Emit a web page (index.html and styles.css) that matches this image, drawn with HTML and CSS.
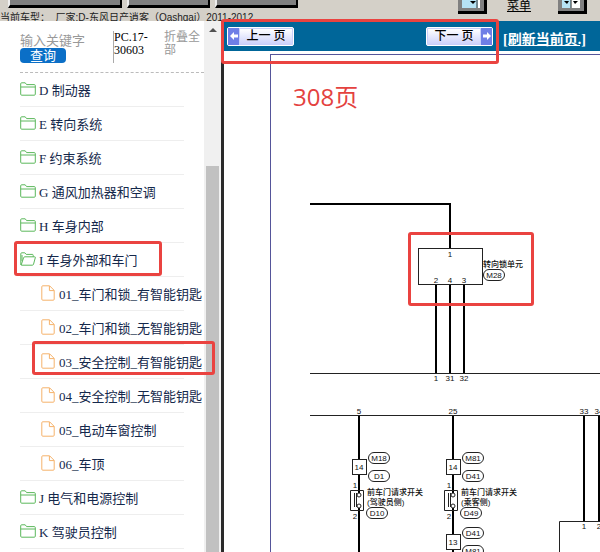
FILE: index.html
```html
<!DOCTYPE html>
<html lang="zh-CN">
<head>
    <meta charset="UTF-8">
    <meta name="viewport" content="width=device-width, initial-scale=1.0">
    <title>308页</title>
    <link rel="stylesheet" href="styles.css">
</head>
<body>
    <!-- shared icons -->
    <svg class="defs" aria-hidden="true">
        <symbol id="folder" viewBox="0 0 16 14">
            <path d="M.7 12.2V1.8Q.7.8 1.7.8H5.2L6.6 2.6H14.3Q15.3 2.6 15.3 3.6V12.2Q15.3 13.2 14.3 13.2H1.7Q.7 13.2.7 12.2ZM.7 5H15.3"/>
        </symbol>
        <symbol id="folder-open" viewBox="0 0 16 14">
            <path d="M.8 12.6V1.8Q.8.8 1.8.8H4.8L6.2 2.4H12.4Q13.2 2.4 13.2 3.4V4.8M1.2 13L3.6 5.7Q3.9 4.8 4.8 4.8H14.6Q15.6 4.8 15.3 5.7L13.5 12.3Q13.3 13.2 12.3 13.2H1.6Q.8 13.2.8 12.2M2 3V9"/>
        </symbol>
        <symbol id="file" viewBox="0 0 14 16">
            <path d="M1.7.8H8.6L13.2 5.4V14.2Q13.2 15.2 12.2 15.2H1.8Q.8 15.2.8 14.2V1.8Q.8.8 1.7.8ZM8.4 1V5.6H13"/>
        </symbol>
        <symbol id="switch" viewBox="0 0 16 23">
            <path d="M1.5 1.5H14.5V21.5H1.5ZM5.5 4V18M7.5 4V18" fill="none" stroke="#222"/>
            <circle cx="10" cy="6" r="2" fill="#fff" stroke="#222"/>
            <circle cx="10" cy="17" r="2" fill="#fff" stroke="#222"/>
        </symbol>
    </svg>

    <header class="toolbar">
        <div class="toolbar-buttons">
            <button class="tool" aria-label="车型"></button>
            <button class="tool narrow" aria-label="手册"></button>
            <button class="tool narrow" aria-label="电路图"></button>
            <div class="menu">
                <button class="icon-btn" aria-label="单栏">
                    <svg width="18" height="8" viewBox="0 0 18 8"><path d="M0 0H18V8H0Z" fill="#b6e3f5"/><path d="M15 0V8" stroke="#333"/><path d="M17 0V8" stroke="#fff" stroke-width="2"/><path d="M8 1H14L11 4Z" fill="#000"/></svg>
                </button>
                <a class="menu-link" href="#">菜单</a>
                <button class="icon-btn" aria-label="双栏">
                    <svg width="18" height="8" viewBox="0 0 18 8"><path d="M0 0H9V8H0Z" fill="#b6e3f5"/><path d="M9 0H18V8H9Z" fill="#fff"/><path d="M9 0V8" stroke="#222"/><path d="M2 1H7L5 4ZM11 1H16L13 4Z" fill="#000"/></svg>
                </button>
            </div>
        </div>
        <div class="car">当前车型：&nbsp; 厂家:D-东风日产逍客（Qashqai）2011-2012</div>
    </header>

    <main class="panes">
        <aside class="sidebar">
            <div class="sidebar-body">
                <form class="search">
                    <div class="search-field">
                        <input type="text" aria-label="输入关键字" placeholder="输入关键字">
                        <button type="button">查询</button>
                    </div>
                    <div class="code">PC.17-<br>30603</div>
                    <a class="collapse" href="#">折叠全部</a>
                </form>
                <ul class="tree">
                    <li><a href="#"><svg class="folder"><use href="#folder"/></svg>D 制动器</a></li>
                    <li><a href="#"><svg class="folder"><use href="#folder"/></svg>E 转向系统</a></li>
                    <li><a href="#"><svg class="folder"><use href="#folder"/></svg>F 约束系统</a></li>
                    <li><a href="#"><svg class="folder"><use href="#folder"/></svg>G 通风加热器和空调</a></li>
                    <li><a href="#"><svg class="folder"><use href="#folder"/></svg>H 车身内部</a></li>
                    <li><a href="#"><svg class="folder"><use href="#folder-open"/></svg>I 车身外部和车门</a></li>
                    <li class="leaf"><a href="#"><svg class="file"><use href="#file"/></svg>01_车门和锁_有智能钥匙</a></li>
                    <li class="leaf"><a href="#"><svg class="file"><use href="#file"/></svg>02_车门和锁_无智能钥匙</a></li>
                    <li class="leaf"><a href="#"><svg class="file"><use href="#file"/></svg>03_安全控制_有智能钥匙</a></li>
                    <li class="leaf"><a href="#"><svg class="file"><use href="#file"/></svg>04_安全控制_无智能钥匙</a></li>
                    <li class="leaf"><a href="#"><svg class="file"><use href="#file"/></svg>05_电动车窗控制</a></li>
                    <li class="leaf"><a href="#"><svg class="file"><use href="#file"/></svg>06_车顶</a></li>
                    <li><a href="#"><svg class="folder"><use href="#folder"/></svg>J 电气和电源控制</a></li>
                    <li><a href="#"><svg class="folder"><use href="#folder"/></svg>K 驾驶员控制</a></li>
                </ul>
            </div>
            <div class="scrollbar">
                <svg width="8" height="4" viewBox="0 0 8 4"><path d="M0 4L4 0L8 4Z" fill="#505050"/></svg>
                <div class="thumb"></div>
            </div>
        </aside>

        <section class="viewer">
            <nav class="pager">
                <button class="page-btn prev">
                    <span class="arrow"><svg width="8" height="8" viewBox="0 0 8 8"><path d="M0 4L4 0V2.5H8V5.5H4V8Z" fill="#fff"/></svg></span>
                    <span class="page-label">上一 页</span>
                </button>
                <button class="page-btn next">
                    <span class="page-label">下一 页</span>
                    <span class="arrow"><svg width="8" height="8" viewBox="0 0 8 8"><path d="M8 4L4 0V2.5H0V5.5H4V8Z" fill="#fff"/></svg></span>
                </button>
                <a class="refresh" href="#">[刷新当前页.]</a>
            </nav>
            <div class="sheet">
                <svg class="diagram" width="329" height="497" viewBox="0 0 329 497">
                    <!-- steering lock unit -->
                    <path class="wire" d="M39 149H179V193M165 229V318M179 229V318M193 229V318"/>
                    <path class="thin" d="M39 318.5H329M39 360.5H329"/>
                    <rect class="thin" x="147.5" y="193.5" width="64" height="36"/>
                    <g class="pin">
                        <text x="179" y="202">1</text>
                        <text x="165" y="228">2</text>
                        <text x="179" y="228">4</text>
                        <text x="193" y="228">3</text>
                        <text x="165" y="326">1</text>
                        <text x="179" y="326">31</text>
                        <text x="193" y="326">32</text>
                    </g>
                    <text class="name" x="212" y="212">转向锁单元</text>
                    <rect class="thin" x="212.5" y="214.5" width="21" height="11" rx="5.5"/>
                    <text class="tag" x="223" y="223">M28</text>

                    <!-- driver side switch -->
                    <path class="wire" d="M88 361V404M88 419V438M88 453V497"/>
                    <rect class="thin" x="81.5" y="404.5" width="14" height="15"/>
                    <use href="#switch" x="78" y="434" width="16" height="23"/>
                    <g class="pin">
                        <text x="88" y="359">5</text>
                        <text x="88" y="415">14</text>
                        <text x="84" y="433">1</text>
                        <text x="84" y="464">2</text>
                    </g>
                    <rect class="thin" x="97.5" y="397.5" width="21" height="11" rx="5.5"/>
                    <rect class="thin" x="97.5" y="415.5" width="21" height="11" rx="5.5"/>
                    <rect class="thin" x="95.5" y="452.5" width="21" height="11" rx="5.5"/>
                    <text class="tag" x="108" y="406">M18</text>
                    <text class="tag" x="108" y="424">D1</text>
                    <text class="tag" x="106" y="461">D10</text>
                    <text class="name" x="96" y="440">前车门请求开关</text>
                    <text class="name" x="96" y="450">(驾驶员侧)</text>

                    <!-- passenger side switch -->
                    <g transform="translate(94 0)">
                        <path class="wire" d="M88 361V404M88 419V438M88 453V479M88 494V497"/>
                        <rect class="thin" x="81.5" y="404.5" width="14" height="15"/>
                        <rect class="thin" x="81.5" y="479.5" width="14" height="15"/>
                        <use href="#switch" x="78" y="434" width="16" height="23"/>
                        <g class="pin">
                            <text x="88" y="359">25</text>
                            <text x="88" y="415">14</text>
                            <text x="84" y="433">1</text>
                            <text x="84" y="464">2</text>
                            <text x="88" y="490">13</text>
                        </g>
                        <rect class="thin" x="97.5" y="397.5" width="21" height="11" rx="5.5"/>
                        <rect class="thin" x="97.5" y="415.5" width="21" height="11" rx="5.5"/>
                        <rect class="thin" x="95.5" y="452.5" width="21" height="11" rx="5.5"/>
                        <rect class="thin" x="97.5" y="472.5" width="21" height="11" rx="5.5"/>
                        <rect class="thin" x="97.5" y="490.5" width="21" height="11" rx="5.5"/>
                        <text class="tag" x="108" y="406">M81</text>
                        <text class="tag" x="108" y="424">D41</text>
                        <text class="tag" x="106" y="461">D49</text>
                        <text class="tag" x="108" y="481">D41</text>
                        <text class="tag" x="108" y="499">M81</text>
                        <text class="name" x="96" y="440">前车门请求开关</text>
                        <text class="name" x="96" y="450">(乘客侧)</text>
                    </g>

                    <path class="wire" d="M313 361V466M328 361V466"/>
                    <path class="thin" d="M288.5 497V466.5H329"/>
                    <g class="pin">
                        <text x="313" y="359">33</text>
                        <text x="328" y="359">34</text>
                        <text x="313" y="474">1</text>
                        <text x="328" y="474">2</text>
                    </g>
                </svg>
            </div>
        </section>
    </main>

    <!-- red marks over the page -->
    <div class="mark mark-pager"></div>
    <div class="mark mark-chapter"></div>
    <div class="mark mark-item"></div>
    <div class="mark mark-unit"></div>
    <div class="mark-text">308页</div>
</body>
</html>
```
FILE: styles.css
```css
* {
    box-sizing: border-box;
}
body {
    margin: 0;
    height: 100vh;
    display: flex;
    flex-direction: column;
    overflow: hidden;
    position: relative;
    background: #fff;
    font-family: "Liberation Serif", "Noto Sans CJK SC", serif;
    font-size: 13px;
}
button, input {
    font: inherit;
    padding: 0;
    border: 0;
    margin: 0;
}
.defs {
    position: absolute;
    width: 0;
    height: 0;
}

/* top bar */
.toolbar {
    height: 21px;
    overflow: hidden;
    background: #d4d0c8;
}
.toolbar-buttons {
    display: flex;
    align-items: flex-start;
    gap: 5px;
    height: 11px;
    padding-left: 8px;
}
.tool {
    width: 114px;
    height: 8px;
    background: #808080;
    border-left: 2px solid #eee;
    border-right: 2px solid #000;
    border-bottom: 3px solid #000;
}
.tool.narrow {
    width: 83px;
}
.menu {
    display: flex;
    align-items: flex-start;
    gap: 20px;
    margin-left: auto;
    padding-right: 13px;
}
.icon-btn {
    width: 29px;
    height: 14px;
    display: flex;
    justify-content: center;
    align-items: flex-start;
    background: #808080;
    border-right: 3px solid #000;
    border-bottom: 3px solid #000;
}
.menu-link {
    margin-right: 7px;
    color: #000;
    font-size: 12px;
    line-height: 13px;
}
.car {
    font-family: "Liberation Sans", "Noto Sans CJK SC", sans-serif;
    font-size: 10px;
    line-height: 13px;
    white-space: nowrap;
    color: #222;
}

.panes {
    flex: 1;
    display: flex;
    min-height: 0;
}

/* left tree */
.sidebar {
    width: 224px;
    flex: none;
    display: flex;
    border-right: 3px solid #2a2a2a;
}
.sidebar-body {
    flex: 1;
    padding-left: 20px;
    overflow: hidden;
}
.search {
    display: flex;
    align-items: flex-start;
    height: 52px;
    padding-top: 10px;
    border-bottom: 1px dashed #bbb;
}
.search-field {
    width: 93px;
    display: flex;
    flex-direction: column;
    align-items: flex-start;
    padding-top: 2px;
}
.search-field input {
    width: 80px;
    height: 15px;
    background: none;
    color: #333;
}
.search-field input::placeholder {
    color: #999;
}
.search-field button {
    width: 46px;
    height: 15px;
    line-height: 15px;
    border-radius: 4px;
    background: #0b6fc7;
    color: #fff;
}
.code, .collapse {
    font-size: 12px;
    line-height: 13px;
}
.code {
    width: 51px;
    height: 32px;
    border-left: 1px solid #aaa;
}
.collapse {
    width: 38px;
    color: #999;
    text-decoration: none;
}
.tree {
    list-style: none;
    margin: 0;
    padding: 0;
}
.tree li {
    width: 164px;
    height: 34px;
    border-bottom: 1px solid #eee;
}
.tree a {
    display: flex;
    align-items: center;
    gap: 3px;
    height: 32px;
    white-space: nowrap;
    color: #14284b;
    text-decoration: none;
}
.tree .leaf a {
    gap: 4px;
    padding-left: 21px;
}
.folder {
    width: 16px;
    height: 14px;
    flex: none;
    fill: none;
    stroke: #5cb85c;
}
.file {
    width: 14px;
    height: 16px;
    flex: none;
    fill: none;
    stroke: #f5b26b;
}
.scrollbar {
    width: 17px;
    display: flex;
    flex-direction: column;
    align-items: center;
    padding: 7px 2px 0;
    background: #f0f0f0;
}
.thumb {
    width: 13px;
    flex: 1;
    margin-top: 134px;
    background: #c1c1c1;
}

/* page viewer */
.viewer {
    flex: 1;
    min-width: 0;
    display: flex;
    flex-direction: column;
}
.pager {
    display: flex;
    align-items: center;
    height: 30px;
    padding-left: 3px;
    background: #069;
}
.page-btn {
    display: flex;
    width: 67px;
    height: 19px;
    border: 1px solid #fff;
    border-radius: 2px;
    background: #c9cffa;
    color: #000;
}
.page-label {
    flex: 1;
    margin: 1px;
    background: linear-gradient(#fff, #cdd2fb);
    font-size: 12px;
    font-weight: 500;
    line-height: 15px;
}
.arrow {
    width: 11px;
    height: 17px;
    display: flex;
    align-items: center;
    justify-content: center;
    background: #6f7fe6;
}
.page-btn.next {
    margin-left: 132px;
}
.refresh {
    margin-left: 10px;
    padding-top: 4px;
    color: #fff;
    font-size: 14px;
    font-weight: bold;
    white-space: nowrap;
}
.sheet {
    flex: 1;
    margin: 3px 0 0 46px;
    border-top: 1px solid #55559a;
    border-left: 1px solid #55559a;
    overflow: hidden;
}
.diagram {
    display: block;
    font-family: "Liberation Sans", "Noto Sans CJK SC", sans-serif;
    fill: #111;
}
.diagram .wire {
    fill: none;
    stroke: #000;
    stroke-width: 2;
}
.diagram .thin {
    fill: none;
    stroke: #222;
}
.diagram .pin, .diagram .tag {
    font-size: 8px;
    text-anchor: middle;
}
.diagram .name {
    font-size: 8px;
    font-weight: 500;
}

/* red marks */
.mark {
    position: absolute;
    border: 3px solid #ea4340;
    border-radius: 3px;
}
.mark-pager {
    left: 221px;
    top: 19px;
    width: 278px;
    height: 45px;
}
.mark-chapter {
    left: 14px;
    top: 241px;
    width: 148px;
    height: 35px;
}
.mark-item {
    left: 32px;
    top: 341px;
    width: 183px;
    height: 34px;
}
.mark-unit {
    left: 408px;
    top: 232px;
    width: 126px;
    height: 74px;
}
.mark-text {
    position: absolute;
    left: 293px;
    top: 82px;
    color: #e4423f;
    font-family: "Open Sans", "Noto Sans CJK SC", sans-serif;
    font-size: 24px;
    line-height: 30px;
}
```
